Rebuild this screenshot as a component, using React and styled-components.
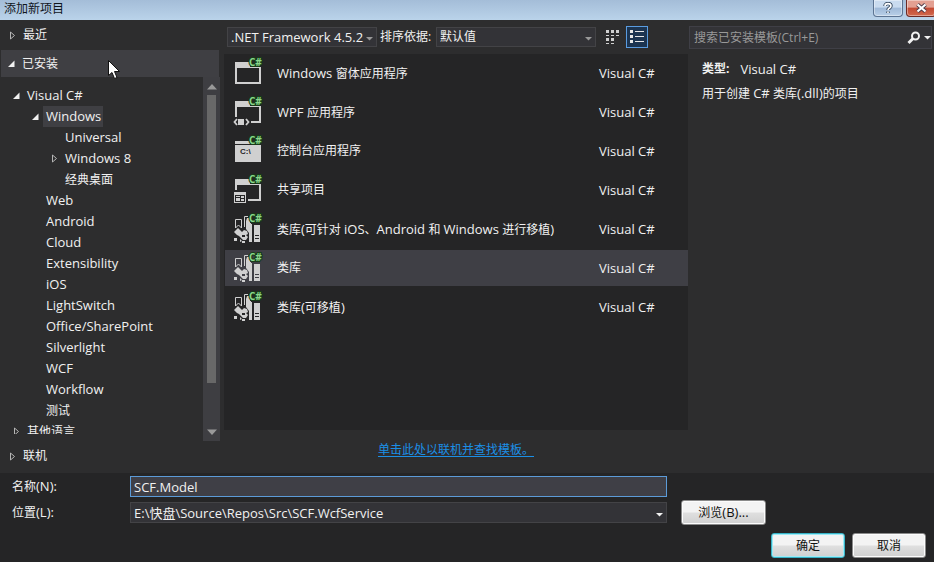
import React, { useState } from "react";
import styled, { createGlobalStyle, css } from "styled-components";

const Global = createGlobalStyle`
  * { box-sizing: border-box; }
  html, body { margin: 0; padding: 0; }
  body, button, input, select {
    font-family: "Open Sans", "Noto Sans CJK SC", sans-serif;
    font-size: 12px;
    line-height: 20px;
  }
  body { background: #252526; color: #f1f1f1; }
  ul { list-style: none; margin: 0; padding: 0; }
`;

const Window = styled.div`
  position: relative;
  display: flex;
  flex-direction: column;
  min-height: 100vh;
  overflow: hidden;
`;

const TitleBar = styled.header`
  display: flex;
  justify-content: space-between;
  height: 20px;
  padding-left: 4px;
  background: linear-gradient(#a4bdd8, #bad3ea);
  color: #10151c;
`;

const Title = styled.h1`
  margin: 0;
  font-size: 12px;
  font-weight: 400;
  line-height: 17px;
`;

const CaptionButtons = styled.div`
  display: flex;
  gap: 3px;
  margin-right: -2px;
`;

const CaptionButton = styled.button`
  display: grid;
  place-items: center;
  width: 30px;
  height: 17px;
  padding: 0;
  border: 1px solid ${(p) => (p.$close ? "#6c2a25" : "#5c7492")};
  border-top: 0;
  border-radius: 0 0 4px 4px;
  box-shadow: inset 0 0 0 1px #ffffff66;
  background: ${(p) =>
    p.$close
      ? "linear-gradient(#e3a092 0 45%, #c34a34 50%, #d2694d)"
      : "linear-gradient(#c9dbef 0 45%, #9fb9d8 50%, #b9d0e8)"};
`;

const Workspace = styled.div`
  display: grid;
  grid-template-columns: 220px minmax(0, 1fr) 246px;
  height: 453px;
  background: #2d2d2e;
`;

const Sidebar = styled.nav`
  display: flex;
  flex-direction: column;
  min-height: 0;
`;

const Section = styled.button`
  display: flex;
  align-items: center;
  gap: 7px;
  flex: none;
  height: ${(p) => (p.$open ? 27 : 30)}px;
  padding: 0 0 0 ${(p) => (p.$open ? 6 : 8)}px;
  border: 0;
  margin: 0 1px;
  color: #f1f1f1;
  text-align: left;
  background: ${(p) => (p.$open ? "#3f3f43" : "transparent")};
`;

const TreeArea = styled.div`
  display: flex;
  flex: none;
  height: 364px;
`;

const Tree = styled.ul`
  flex: 1;
  height: 357px;
  padding-top: 8px;
  overflow: hidden;
`;

const TreeRow = styled.li`
  display: flex;
  align-items: center;
  height: 21px;
  padding-left: ${(p) => 8 + p.$level * 19}px;
`;

const Twisty = styled.span`
  display: grid;
  place-items: center;
  flex: none;
  width: 16px;
`;

const TreeLabel = styled.span`
  padding: 0 2px 0 3px;
  line-height: 20px;
  white-space: nowrap;
  background: ${(p) => (p.$selected ? "#3f3f43" : "transparent")};
`;

const ScrollTrack = styled.div`
  display: flex;
  flex-direction: column;
  align-items: center;
  gap: 5px;
  width: 17px;
  padding: 7px 0 6px;
  background: #3e3e42;
`;

const ScrollThumb = styled.div`
  flex: 0 0 288px;
  width: 9px;
  background: #686868;
`;

const ScrollSpace = styled.div`
  flex: 1;
`;

const Main = styled.main`
  display: flex;
  flex-direction: column;
  min-width: 0;
  padding-left: 4px;
`;

const Toolbar = styled.div`
  display: flex;
  align-items: center;
  height: 34px;
  padding-left: 3px;
`;

const SelectBox = styled.div`
  position: relative;
  ${(p) =>
    p.$grow
      ? css`
          flex: 1;
          min-width: 0;
        `
      : css`
          flex: 0 0 150px;
        `}
  svg {
    position: absolute;
    right: 4px;
    top: 50%;
    pointer-events: none;
  }
`;

const Select = styled.select`
  display: block;
  appearance: none;
  width: 100%;
  height: ${(p) => (p.$tall ? 21 : 20)}px;
  padding: 0 8px 0 3px;
  border: 1px solid #434346;
  border-radius: 0;
  background: #333337;
  color: #f1f1f1;
  font-size: 13px;
  line-height: 18px;
  &:lang(zh) { font-size: 12px; }
`;

const SortLabel = styled.label`
  width: 59px;
  padding-left: 3px;
  white-space: nowrap;
`;

const ViewButtons = styled.div`
  display: flex;
  gap: 3px;
  padding: 0 40px 0 5px;
`;

const ViewButton = styled.button`
  display: grid;
  place-items: center;
  width: 22px;
  height: 22px;
  padding: 0;
  border: 1px solid ${(p) => (p.$active ? "#5a9ce0" : "transparent")};
  background: ${(p) => (p.$active ? "#1c3450" : "transparent")};
`;

const TemplateList = styled.ul`
  display: flex;
  flex-direction: column;
  gap: 3px;
  height: 376px;
  padding: 1px 0 0 1px;
  background: #252526;
`;

const Template = styled.li`
  background: ${(p) => (p.$selected ? "#3f3f45" : "transparent")};
`;

const TemplateButton = styled.button`
  display: grid;
  grid-template-columns: 44px 1fr 89px;
  align-items: center;
  width: 100%;
  height: 36px;
  padding: 0 0 0 8px;
  border: 0;
  background: none;
  color: #f1f1f1;
  text-align: left;
  white-space: nowrap;
`;

const TemplateDrawing = styled.svg`
  overflow: visible;
`;

const OnlineRow = styled.div`
  display: flex;
  justify-content: center;
  padding-top: 10px;
`;

const OnlineLink = styled.a`
  color: #1b8fe6;
  text-decoration: underline;
  text-underline-offset: 2px;
`;

const Aside = styled.aside`
  display: flex;
  flex-direction: column;
`;

const SearchBox = styled.div`
  display: flex;
  align-items: center;
  gap: 3px;
  height: 23px;
  margin: 6px 2px 0 1px;
  border: 1px solid #3f3f46;
  background: #333337;
`;

const SearchInput = styled.input`
  flex: 1;
  min-width: 0;
  padding: 0 0 0 4px;
  border: 0;
  outline: 0;
  background: none;
  color: #f1f1f1;
  &::placeholder { color: #999; opacity: 1; }
`;

const IconButton = styled.button`
  display: grid;
  place-items: center;
  flex: none;
  padding: 0;
  border: 0;
  background: none;
`;

const Details = styled.div`
  display: grid;
  gap: 4px;
  padding: 10px 0 0 14px;
`;

const DetailLine = styled.p`
  display: flex;
  gap: ${(p) => (p.$pair ? 11 : 0)}px;
  margin: 0;
  white-space: pre;
`;

const Footer = styled.form`
  display: grid;
  grid-template-columns: 118px minmax(0, 1fr) 259px;
  row-gap: 3px;
  align-items: center;
  padding: 3px 8px 4px 12px;
`;

const TextBox = styled.input`
  width: 100%;
  height: 21px;
  padding: 0 3px;
  border: 1px solid #5c9bd8;
  outline: 0;
  background: #3f3f46;
  color: #f1f1f1;
  font-size: 13px;
`;

const BrowseCell = styled.div`
  padding-left: 14px;
`;

const Actions = styled.div`
  grid-column: 1 / -1;
  display: flex;
  justify-content: flex-end;
  gap: 7px;
  padding-top: 5px;
`;

const PushButton = styled.button`
  display: block;
  width: ${(p) => (p.$wide ? 85 : 74)}px;
  height: 25px;
  padding: 0;
  border: 1px solid ${(p) => (p.$primary ? "#37b4c8" : "#8a8a8a")};
  border-radius: 3px;
  box-shadow: inset 0 0 0 1px ${(p) => (p.$primary ? "#9deaf5" : "#fcfcfc")};
  background: linear-gradient(#f3f3f3 0 48%, #dfdfdf 52%, #d0d0d0);
  color: #111;
`;

const Pointer = styled.svg`
  position: absolute;
  left: 108px;
  top: 60px;
  pointer-events: none;
`;

const Latin = styled.span`
  font-size: 13px;
`;

/* Latin runs are set one size larger than the Chinese around them. */
function Mixed({ children }) {
  return children
    .split(/([\x21-\x7e][\x20-\x7e]*)/)
    .map((run, i) => (i % 2 ? <Latin key={i}>{run}</Latin> : run));
}

function Arrow({ open }) {
  return open ? (
    <svg width="8" height="8" viewBox="0 0 8 8" aria-hidden="true">
      <path d="M7.5 0.5V7H1Z" fill="#f1f1f1" />
    </svg>
  ) : (
    <svg width="7" height="9" viewBox="0 0 7 9" aria-hidden="true">
      <path d="M1.5 1V8L5.5 4.5Z" fill="none" stroke="#b5b5b5" />
    </svg>
  );
}

function Caret({ color = "#999" }) {
  return (
    <svg width="7" height="4" viewBox="0 0 7 4" aria-hidden="true">
      <path d="M0 0H7L3.5 3.5Z" fill={color} />
    </svg>
  );
}

function ScrollArrow({ up }) {
  return (
    <svg width="10" height="6" viewBox="0 0 10 6" aria-hidden="true">
      <path d={up ? "M0 5.5H10L5 0Z" : "M0 0.5H10L5 6Z"} fill="#999" />
    </svg>
  );
}

function Library({ back }) {
  return (
    <>
      <path d="M2.5 6.5H8.5V15L5.5 12L2.5 15Z" fill="none" stroke="#d0d0d0" />
      <path d="M11.5 14V3.5H15" fill="none" stroke="#d0d0d0" />
      <path d="M14 5H18V11H19V29H16V20L13 16V8Z" fill="#d0d0d0" />
      <path d="M21 12H27V29H21Z" fill="#d0d0d0" />
      <path d="M22 22.5H26M22 25.5H26" stroke={back} />
      <path
        d="M5 15L9 19L11 17L14 18L15 21L13 22L15 24L13 27H10L8 25L6 23L4 22L1 19ZM1 25H4V28H1ZM9 28H12V30H9ZM7 26L9 28L7 29Z"
        fill="#d0d0d0"
      />
      <path d="M9 22H12V24H9Z" fill={back} />
    </>
  );
}

function Glyph({ kind, back }) {
  switch (kind) {
    case "form":
      return <path d="M2 5H28V27H2ZM4 11V25H26V11Z" fill="#d0d0d0" fillRule="evenodd" />;
    case "wpf":
      return (
        <>
          <path d="M2 5H28V27H18V25H26V11H4V21H2Z" fill="#d0d0d0" />
          <path
            d="M4 23L1.5 26L4 29M13 23L15.5 26L13 29"
            fill="none"
            stroke="#d0d0d0"
            strokeWidth="1.8"
          />
          <rect x="5" y="23" width="6" height="6" fill="#d0d0d0" />
        </>
      );
    case "console":
      return (
        <>
          <path d="M2 6H28V9H2ZM2 10H28V27H2Z" fill="#d0d0d0" />
          <text x="7" y="19" fontFamily="Liberation Sans" fontSize="8" fontWeight="700" fill={back}>
            C:\
          </text>
        </>
      );
    case "shared":
      return (
        <>
          <path d="M2 5H28V27H15V25H26V11H4V16H2Z" fill="#d0d0d0" />
          <path d="M1 18H13V29H1ZM2 21V28H12V21Z" fill="#d0d0d0" fillRule="evenodd" />
          <path d="M3 22H7V23H3ZM3 24H7V27H3ZM8 22H11V24H8ZM8 25H11V27H8Z" fill="#d0d0d0" />
        </>
      );
    default:
      return <Library back={back} />;
  }
}

function TemplateIcon({ kind, selected }) {
  const back = selected ? "#3f3f45" : "#252526";
  return (
    <TemplateDrawing width="32" height="32" viewBox="0 0 32 32" aria-hidden="true">
      <Glyph kind={kind} back={back} />
      <path d="M19 1H30V10H17V4Z" fill={back} />
      <text
        x="16"
        y="9"
        fontFamily="Open Sans"
        fontSize="10"
        fontWeight="700"
        fill="#8ad68c"
        stroke="#173d19"
        strokeWidth="2"
        paintOrder="stroke"
      >
        C#
      </text>
    </TemplateDrawing>
  );
}

const tree = [
  ["Visual C#", 0, "open"],
  ["Windows", 1, "open"],
  ["Universal", 2],
  ["Windows 8", 2, "closed"],
  ["经典桌面", 2],
  ["Web", 1],
  ["Android", 1],
  ["Cloud", 1],
  ["Extensibility", 1],
  ["iOS", 1],
  ["LightSwitch", 1],
  ["Office/SharePoint", 1],
  ["Silverlight", 1],
  ["WCF", 1],
  ["Workflow", 1],
  ["测试", 1],
  ["其他语言", 0, "closed"],
];

const templates = [
  ["form", "Windows 窗体应用程序"],
  ["wpf", "WPF 应用程序"],
  ["console", "控制台应用程序"],
  ["shared", "共享项目"],
  ["library", "类库(可针对 iOS、Android 和 Windows 进行移植)"],
  ["library", "类库"],
  ["library", "类库(可移植)"],
];

export default function App() {
  const [selected, setSelected] = useState(5);
  const [name, setName] = useState("SCF.Model");

  return (
    <Window>
      <Global />
      <TitleBar>
        <Title>添加新项目</Title>
        <CaptionButtons>
          <CaptionButton type="button" aria-label="帮助">
            <svg width="10" height="12" viewBox="0 0 10 12">
              <path
                d="M2 4C2 0.8 8 0.8 8 4C8 6 5 6 5 8M5 9.5V11"
                fill="none"
                stroke="#34475d"
                strokeWidth="3.4"
              />
              <path
                d="M2 4C2 0.8 8 0.8 8 4C8 6 5 6 5 8M5 9.5V11"
                fill="none"
                stroke="#fff"
                strokeWidth="1.6"
              />
            </svg>
          </CaptionButton>
          <CaptionButton type="button" $close aria-label="关闭">
            <svg width="13" height="10" viewBox="0 0 13 10">
              <path d="M2.5 1.5L10.5 8.5M10.5 1.5L2.5 8.5" stroke="#4b3a48" strokeWidth="4" />
              <path d="M2.5 1.5L10.5 8.5M10.5 1.5L2.5 8.5" stroke="#fff" strokeWidth="2.2" />
            </svg>
          </CaptionButton>
        </CaptionButtons>
      </TitleBar>

      <Workspace>
        <Sidebar>
          <Section type="button">
            <Arrow />
            最近
          </Section>
          <Section type="button" $open aria-expanded="true">
            <Arrow open />
            已安装
          </Section>
          <TreeArea>
            <Tree>
              {tree.map(([label, level, state]) => (
                <TreeRow key={label} $level={level}>
                  <Twisty>{state && <Arrow open={state === "open"} />}</Twisty>
                  <TreeLabel $selected={label === "Windows"}>
                    <Mixed>{label}</Mixed>
                  </TreeLabel>
                </TreeRow>
              ))}
            </Tree>
            <ScrollTrack>
              <ScrollArrow up />
              <ScrollThumb />
              <ScrollSpace />
              <ScrollArrow />
            </ScrollTrack>
          </TreeArea>
          <Section type="button">
            <Arrow />
            联机
          </Section>
        </Sidebar>

        <Main>
          <Toolbar>
            <SelectBox>
              <Select aria-label="目标框架">
                <option>.NET Framework 4.5.2</option>
              </Select>
              <Caret />
            </SelectBox>
            <SortLabel htmlFor="sort">排序依据:</SortLabel>
            <SelectBox $grow>
              <Select id="sort" lang="zh">
                <option>默认值</option>
              </Select>
              <Caret />
            </SelectBox>
            <ViewButtons>
              <ViewButton type="button" aria-label="小图标">
                <svg width="15" height="16" viewBox="0 0 15 16">
                  <path
                    d="M1 1H4V4H1ZM6 1H9V4H6ZM11 1H14V4H11ZM1 9H4V12H1ZM6 9H9V12H6ZM1 6H4V7H1ZM6 6H9V7H6ZM11 6H14V7H11ZM1 14H4V15H1ZM6 14H9V15H6Z"
                    fill="#d0d0d0"
                  />
                </svg>
              </ViewButton>
              <ViewButton type="button" $active aria-label="列表" aria-pressed="true">
                <svg width="16" height="16" viewBox="0 0 16 16">
                  <path
                    d="M1 1H4V4H1ZM1 6H4V9H1ZM1 11H4V14H1ZM6 2H15V3H6ZM6 7H15V8H6ZM6 12H15V13H6Z"
                    fill="#e6e6e6"
                  />
                </svg>
              </ViewButton>
            </ViewButtons>
          </Toolbar>

          <TemplateList>
            {templates.map(([kind, label], i) => (
              <Template key={label} $selected={i === selected}>
                <TemplateButton type="button" onClick={() => setSelected(i)}>
                  <TemplateIcon kind={kind} selected={i === selected} />
                  <span>
                    <Mixed>{label}</Mixed>
                  </span>
                  <Latin>Visual C#</Latin>
                </TemplateButton>
              </Template>
            ))}
          </TemplateList>
          <OnlineRow>
            <OnlineLink href="#online">单击此处以联机并查找模板。</OnlineLink>
          </OnlineRow>
        </Main>

        <Aside>
          <SearchBox>
            <SearchInput aria-label="搜索" placeholder="搜索已安装模板(Ctrl+E)" />
            <IconButton type="button" aria-label="搜索">
              <svg width="14" height="14" viewBox="0 0 14 14">
                <circle cx="8.5" cy="5" r="3.5" fill="none" stroke="#f1f1f1" strokeWidth="2" />
                <path d="M6 7.5L1.5 12" stroke="#f1f1f1" strokeWidth="3" />
              </svg>
            </IconButton>
            <IconButton type="button" aria-label="搜索选项">
              <Caret color="#f1f1f1" />
            </IconButton>
          </SearchBox>
          <Details>
            <DetailLine $pair>
              <strong>类型:</strong>
              <Latin>Visual C#</Latin>
            </DetailLine>
            <DetailLine>
              <span>
                <Mixed>用于创建 C# 类库(.dll)的项目</Mixed>
              </span>
            </DetailLine>
          </Details>
        </Aside>
      </Workspace>

      <Footer onSubmit={(e) => e.preventDefault()}>
        <label htmlFor="name">
          <Mixed>名称(N):</Mixed>
        </label>
        <TextBox id="name" value={name} onChange={(e) => setName(e.target.value)} />
        <span />
        <label htmlFor="location">
          <Mixed>位置(L):</Mixed>
        </label>
        <SelectBox $grow>
          <Select id="location" $tall>
            <option>E:\快盘\Source\Repos\Src\SCF.WcfService</option>
          </Select>
          <Caret color="#f1f1f1" />
        </SelectBox>
        <BrowseCell>
          <PushButton type="button" $wide>
            <Mixed>浏览(B)...</Mixed>
          </PushButton>
        </BrowseCell>
        <Actions>
          <PushButton type="submit" $primary>
            确定
          </PushButton>
          <PushButton type="button">取消</PushButton>
        </Actions>
      </Footer>

      <Pointer width="12" height="20" viewBox="0 0 12 20" aria-hidden="true">
        <path
          d="M0.5 0.5V15.5L4 12.5L6.5 18.5L9 17.5L6.5 11.5H11.5Z"
          fill="#fff"
          stroke="#111"
        />
      </Pointer>
    </Window>
  );
}
